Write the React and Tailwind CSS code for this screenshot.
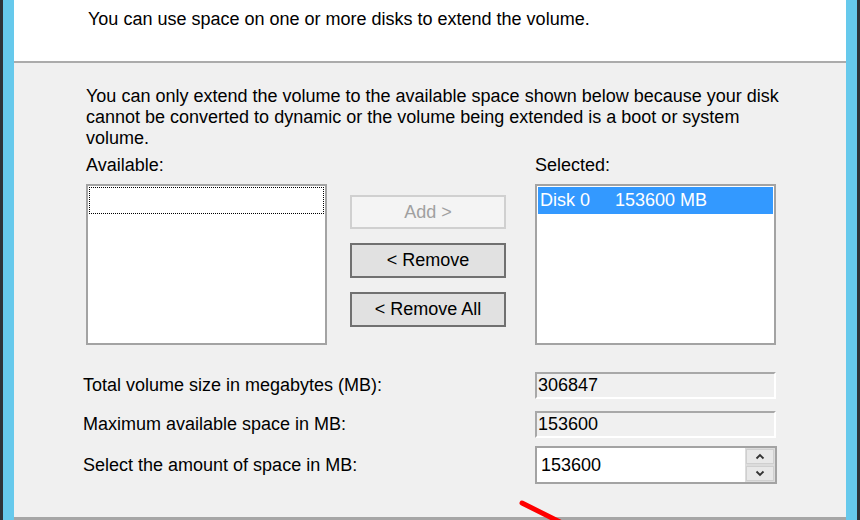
import React from "react";

const font = { fontFamily: '"Liberation Sans", Arial, sans-serif' };

function Chevron({ up }) {
  return (
    <svg width="10" height="7" viewBox="0 0 10 7">
      <path
        d={up ? "M1.5 5.5 L5 2 L8.5 5.5" : "M1.5 1.5 L5 5 L8.5 1.5"}
        fill="none"
        stroke="#333"
        strokeWidth="1.8"
      />
    </svg>
  );
}

export default function App() {
  return (
    <div
      className="relative flex w-[860px] h-[520px] overflow-hidden text-[18px] leading-[21px] text-black"
      style={font}
    >
      <div className="w-[3px] bg-[#2e3338]" />
      <div className="w-[11px] bg-[#66c9ec]" />
      <div className="flex-1 flex flex-col">
        <div className="h-[61px] bg-white pl-[74px] pt-[9px]">
          You can use space on one or more disks to extend the volume.
        </div>
        <div className="h-[2px] bg-[#ababab]" />
        <div className="flex-1 flex flex-col bg-[#f0f0f0] border-b-[3px] border-[#a6a6a6]">
          <div className="ml-[72px] mt-[23px]">
            <div className="whitespace-nowrap">
              You can only extend the volume to the available space shown below because your disk
            </div>
            <div className="whitespace-nowrap">
              cannot be converted to dynamic or the volume being extended is a boot or system
            </div>
            <div>volume.</div>
          </div>
          <div className="flex ml-[72px] mt-[6px]">
            <div className="w-[241px] flex flex-col">
              <div className="h-[21px]">Available:</div>
              <div className="mt-[8px] h-[161px] bg-white border-2 border-[#a3a3a3] p-px">
                <div className="h-[27px] border border-dotted border-black" />
              </div>
            </div>
            <div className="ml-[23px] w-[156px] pt-[40px] flex flex-col gap-[14px]">
              <div className="h-[34px] flex items-center justify-center bg-[#f4f4f4] border-2 border-[#d0d0d0] text-[#a0a0a0]">
                Add &gt;
              </div>
              <div className="h-[35px] flex items-center justify-center bg-[#e1e1e1] border-2 border-[#707070]">
                &lt; Remove
              </div>
              <div className="h-[35px] flex items-center justify-center bg-[#e1e1e1] border-2 border-[#707070]">
                &lt; Remove All
              </div>
            </div>
            <div className="ml-[29px] w-[241px] flex flex-col">
              <div className="h-[21px]">Selected:</div>
              <div className="mt-[8px] h-[161px] bg-white border-2 border-[#a3a3a3] p-px">
                <div className="h-[27px] bg-[#3399ff] text-white flex items-center pl-[2px] whitespace-pre">
                  <span className="w-[75px]">Disk 0</span>
                  <span>153600 MB</span>
                </div>
              </div>
            </div>
          </div>
          <div className="flex items-center ml-[69px] mt-[27px] h-[27px]">
            <div className="w-[452px]">Total volume size in megabytes (MB):</div>
            <div className="w-[241px] h-[27px] bg-[#f0f0f0] border-2 border-t-[#a8a8a8] border-l-[#a8a8a8] border-b-white border-r-white flex items-center pl-px">
              306847
            </div>
          </div>
          <div className="flex items-center ml-[69px] mt-[12px] h-[27px]">
            <div className="w-[452px]">Maximum available space in MB:</div>
            <div className="w-[241px] h-[27px] bg-[#f0f0f0] border-2 border-t-[#a8a8a8] border-l-[#a8a8a8] border-b-white border-r-white flex items-center pl-px">
              153600
            </div>
          </div>
          <div className="flex items-center ml-[69px] mt-[8px] h-[38px]">
            <div className="w-[452px]">Select the amount of space in MB:</div>
            <div className="w-[242px] h-[38px] flex border-2 border-[#a3a3a3] bg-white">
              <div className="flex-1 flex items-center pl-[4px]">153600</div>
              <div className="w-[30px] flex flex-col gap-[2px] bg-[#dcdcdc] p-px">
                <div className="flex-1 bg-[#e8e8e8] border border-[#cfcfcf] flex items-center justify-center">
                  <Chevron up />
                </div>
                <div className="flex-1 bg-[#e8e8e8] border border-[#cfcfcf] flex items-center justify-center">
                  <Chevron />
                </div>
              </div>
            </div>
          </div>
        </div>
      </div>
      <div className="w-[11px] bg-[#66c9ec]" />
      <div className="w-[3px] bg-[#2e3338]" />
      <svg
        className="absolute left-[510px] top-[495px]"
        width="60"
        height="30"
        viewBox="0 0 60 30"
      >
        <line x1="12" y1="8" x2="50" y2="27" stroke="#ff0000" strokeWidth="5" strokeLinecap="round" />
      </svg>
    </div>
  );
}
